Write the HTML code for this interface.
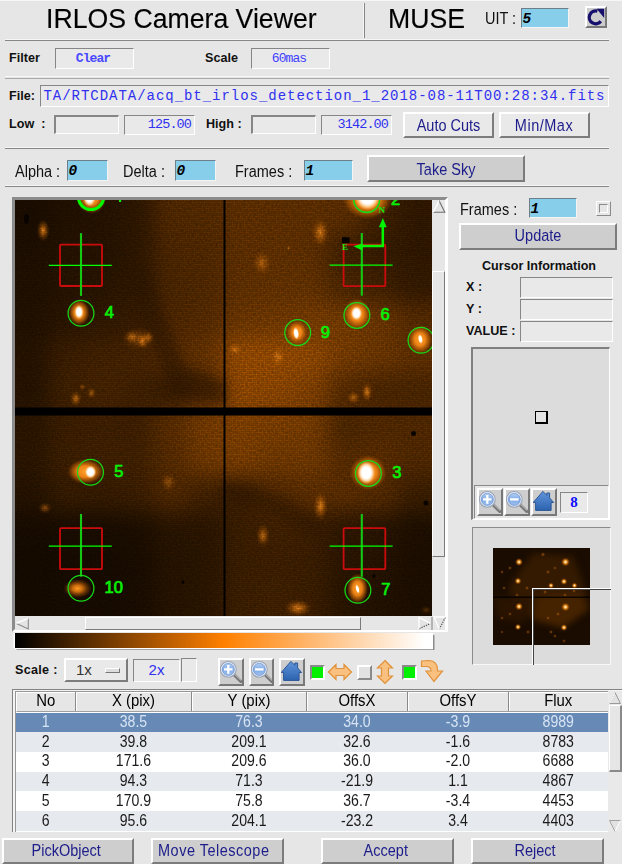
<!DOCTYPE html>
<html><head><meta charset="utf-8"><title>IRLOS Camera Viewer</title>
<style>
html,body{margin:0;padding:0}
body{width:622px;height:864px;background:#e6e6e6;position:relative;overflow:hidden;font-family:"Liberation Sans",sans-serif;color:#000}
div,span{box-sizing:border-box}
.a{position:absolute;white-space:nowrap}
.hs{position:absolute;height:2.4px;border-top:1px solid #f6f6f6;border-bottom:1.4px solid #868686}
.vs{position:absolute;width:2.4px;border-left:1px solid #f6f6f6;border-right:1.4px solid #868686}
.t{position:absolute;white-space:nowrap;font-size:14.5px;line-height:17px;color:#111;transform:scaleY(1.12);transform-origin:50% 78%}
.s{display:inline-block;transform:scaleY(1.1);transform-origin:50% 72%}
.b{position:absolute;white-space:nowrap;font-weight:bold;font-size:12.6px;line-height:15px;color:#111}
.sunk{position:absolute;border:1px solid;border-color:#868686 #fff #fff #868686;background:#e9e9e9}
.ent{position:absolute;border:1px solid;border-color:#6c7f8a #f4f4f4 #f4f4f4 #6c7f8a;background:#87ceeb;font:italic bold 14.5px "Liberation Mono",monospace;line-height:20px;padding-left:0.5px;color:#000}
.btn{position:absolute;border:2px solid;border-color:#fff #7c7c7c #7c7c7c #fff;background:#cecece;color:#1c1c8a;font-size:14.5px;text-align:center;white-space:nowrap}
.btl{background:#e9e9e9}
.mono{font-family:"Liberation Mono",monospace;color:#3030f0}
.ib{position:absolute;border:2px solid;border-color:#fff #787878 #787878 #fff;background:#cecece}
.ib svg{position:absolute;left:0;top:0}
.chk{position:absolute;width:15px;height:15px;border:2px solid;border-color:#8a8a8a #fff #fff #8a8a8a;background:#00f000}
.chk.off{border-color:#fff #8a8a8a #8a8a8a #fff;background:#e2e2e2}
table{border-collapse:collapse}
</style></head><body>
<div class="a" style="left:0;top:0;width:622px;height:1.3px;background:#f6f6f6"></div>
<div class="a" style="left:46px;top:4px;font-size:26.67px;line-height:31px;-webkit-text-stroke:0.15px #000;transform:scaleY(1.05);transform-origin:50% 79%">IRLOS Camera Viewer</div>
<div class="vs" style="left:362.6px;top:3px;height:34.5px"></div>
<div class="a" style="left:388px;top:4px;font-size:26.67px;line-height:31px;-webkit-text-stroke:0.15px #000;transform:scaleY(1.05);transform-origin:50% 79%">MUSE</div>
<div class="t" style="left:485px;top:11px">UIT :</div>
<div class="ent" style="left:521px;top:8px;width:48px;height:20px">5</div>
<div class="ib" style="left:584.5px;top:6px;width:22px;height:22px;background:#cdcdcd"><svg width="19" height="18" viewBox="0 0 19 18"><path d="M10.4 3.2 A6.4 6.4 0 1 0 13.8 13.2" fill="none" stroke="#16106c" stroke-width="3.3"/><path d="M9.6 0.8 L17.2 0.8 L17.2 10 Z" fill="#16106c"/></svg></div>
<div class="hs" style="left:5px;top:38.9px;width:604px"></div>
<div class="b" style="left:9px;top:51px">Filter</div>
<div class="sunk mono" style="left:55px;top:48px;width:79px;height:21px;font:bold 13px 'Liberation Mono',monospace;letter-spacing:-0.9px;line-height:20px;padding-right:3px;text-align:center;color:#4848ff">Clear</div>
<div class="b" style="left:205px;top:51px">Scale</div>
<div class="sunk mono" style="left:251px;top:48px;width:79px;height:21px;font:13px 'Liberation Mono',monospace;letter-spacing:-0.9px;line-height:20px;padding-right:3px;text-align:center;color:#4040ff">60mas</div>
<div class="hs" style="left:5px;top:76.2px;width:604px;height:2.8px;border-bottom:1.8px solid #aaa"></div>
<div class="b" style="left:9px;top:89px">File:</div>
<div class="sunk mono" style="left:40px;top:85px;width:569px;height:22px;font-size:14px;letter-spacing:0.965px;line-height:21px;padding-left:2.5px;overflow:hidden;white-space:nowrap">TA/RTCDATA/acq_bt_irlos_detection_1_2018-08-11T00:28:34.fits</div>
<div class="b" style="left:9px;top:117px">Low&nbsp;&nbsp;:</div>
<div class="sunk" style="left:54px;top:115px;width:65px;height:19px;border-width:2px 1px 1px 2px"></div>
<div class="sunk mono" style="left:124px;top:115px;width:71px;height:20px;font-size:13.5px;letter-spacing:-0.9px;line-height:18px;text-align:right;padding-right:3px">125.00</div>
<div class="b" style="left:206px;top:117px">High :</div>
<div class="sunk" style="left:251px;top:115px;width:65px;height:19px;border-width:2px 1px 1px 2px"></div>
<div class="sunk mono" style="left:321px;top:115px;width:71px;height:20px;font-size:13.5px;letter-spacing:-0.9px;line-height:18px;text-align:right;padding-right:3px">3142.00</div>
<div class="btn btl" style="left:403px;top:112px;width:91px;height:26px;line-height:24px"><span class="s">Auto Cuts</span></div>
<div class="btn btl" style="left:498.5px;top:112px;width:91px;height:26px;line-height:24px;letter-spacing:0.5px"><span class="s">Min/Max</span></div>
<div class="hs" style="left:5px;top:147px;width:604px"></div>
<div class="t" style="left:15px;top:164px">Alpha :</div>
<div class="ent" style="left:67px;top:160px;width:41px;height:21px">0</div>
<div class="t" style="left:123px;top:164px">Delta :</div>
<div class="ent" style="left:175px;top:160px;width:41px;height:21px">0</div>
<div class="t" style="left:235px;top:164px">Frames :</div>
<div class="ent" style="left:304px;top:160px;width:49px;height:21px">1</div>
<div class="btn" style="left:367px;top:155px;width:158px;height:27px;line-height:26px"><span class="s">Take Sky</span></div>
<div class="hs" style="left:5px;top:184.5px;width:604px;height:2.5px;border-bottom-width:1.5px"></div>
<div class="a" style="left:12px;top:197px;width:436.2px;height:435px;border:3px solid;border-right-width:3.4px;border-color:#8c8c8c #fff #fff #8c8c8c;background:#e9e9e9"></div>
<svg class="a" style="left:15px;top:200px" width="417" height="416" viewBox="15 200 417 416">
<defs>
<radialGradient id="gb"><stop offset="0" stop-color="#fff"/><stop offset="0.28" stop-color="#fff"/><stop offset="0.42" stop-color="#ffc070"/><stop offset="0.6" stop-color="#f08010" stop-opacity="0.85"/><stop offset="0.8" stop-color="#c86000" stop-opacity="0.35"/><stop offset="1" stop-color="#a04800" stop-opacity="0"/></radialGradient>
<radialGradient id="gm"><stop offset="0" stop-color="#fff"/><stop offset="0.15" stop-color="#ffe8c0"/><stop offset="0.35" stop-color="#ffa030"/><stop offset="0.6" stop-color="#e07000" stop-opacity="0.7"/><stop offset="1" stop-color="#a04800" stop-opacity="0"/></radialGradient>
<radialGradient id="gd"><stop offset="0" stop-color="#ffa030"/><stop offset="0.3" stop-color="#f08010" stop-opacity="0.9"/><stop offset="0.65" stop-color="#c06000" stop-opacity="0.45"/><stop offset="1" stop-color="#a04800" stop-opacity="0"/></radialGradient>
<radialGradient id="gh"><stop offset="0" stop-color="#ffa028"/><stop offset="0.45" stop-color="#f48818" stop-opacity="0.95"/><stop offset="0.75" stop-color="#d87008" stop-opacity="0.5"/><stop offset="1" stop-color="#b05800" stop-opacity="0"/></radialGradient>
<radialGradient id="gh2"><stop offset="0" stop-color="#ff9a20"/><stop offset="0.35" stop-color="#e87c10" stop-opacity="0.85"/><stop offset="0.7" stop-color="#c06004" stop-opacity="0.4"/><stop offset="1" stop-color="#a05000" stop-opacity="0"/></radialGradient>
<radialGradient id="gc"><stop offset="0" stop-color="#fff"/><stop offset="0.5" stop-color="#fff"/><stop offset="0.72" stop-color="#ffe6c0" stop-opacity="0.8"/><stop offset="1" stop-color="#ffb050" stop-opacity="0"/></radialGradient>
<radialGradient id="gf"><stop offset="0" stop-color="#f89020" stop-opacity="1"/><stop offset="0.35" stop-color="#e07810" stop-opacity="0.7"/><stop offset="0.7" stop-color="#c06404" stop-opacity="0.28"/><stop offset="1" stop-color="#a04800" stop-opacity="0"/></radialGradient>
<radialGradient id="gv"><stop offset="0" stop-color="#c06810" stop-opacity="0.7"/><stop offset="0.5" stop-color="#a85808" stop-opacity="0.35"/><stop offset="1" stop-color="#a04800" stop-opacity="0"/></radialGradient>
<filter id="bl" color-interpolation-filters="sRGB" x="-20%" y="-20%" width="140%" height="140%"><feGaussianBlur stdDeviation="11"/></filter>
<filter id="bs" color-interpolation-filters="sRGB" x="-20%" y="-20%" width="140%" height="140%"><feGaussianBlur stdDeviation="5"/></filter>
<filter id="nz" x="0" y="0" width="100%" height="100%" color-interpolation-filters="sRGB"><feTurbulence type="fractalNoise" baseFrequency="0.5" numOctaves="1" seed="7" result="t"/><feColorMatrix in="t" type="matrix" values="0 0 0 0 0  0 0 0 0 0  0 0 0 0 0  0.62 0 0 0 -0.2"/></filter>
<pattern id="scan" width="2" height="2" patternUnits="userSpaceOnUse"><rect width="2" height="1" y="1" fill="#000" opacity="0.10"/><rect width="1" height="2" x="1" fill="#000" opacity="0.05"/></pattern>
</defs>
<rect x="15" y="199" width="417" height="417" fill="#462300"/>
<g filter="url(#bl)">
<rect x="-15.0" y="169.0" width="65.2" height="65.2" fill="#1f0f00"/>
<rect x="49.8" y="169.0" width="35.2" height="65.2" fill="#271300"/>
<rect x="84.5" y="169.0" width="35.2" height="65.2" fill="#2b1500"/>
<rect x="119.2" y="169.0" width="35.2" height="65.2" fill="#341a00"/>
<rect x="154.0" y="169.0" width="35.2" height="65.2" fill="#5d2e00"/>
<rect x="188.8" y="169.0" width="35.2" height="65.2" fill="#603000"/>
<rect x="223.5" y="169.0" width="35.2" height="65.2" fill="#6d3600"/>
<rect x="258.2" y="169.0" width="35.2" height="65.2" fill="#6d3600"/>
<rect x="293.0" y="169.0" width="35.2" height="65.2" fill="#6d3600"/>
<rect x="327.8" y="169.0" width="35.2" height="65.2" fill="#693400"/>
<rect x="362.5" y="169.0" width="35.2" height="65.2" fill="#4a2500"/>
<rect x="397.2" y="169.0" width="65.2" height="65.2" fill="#371b00"/>
<rect x="-15.0" y="233.8" width="65.2" height="35.2" fill="#221100"/>
<rect x="49.8" y="233.8" width="35.2" height="35.2" fill="#2b1500"/>
<rect x="84.5" y="233.8" width="35.2" height="35.2" fill="#2b1500"/>
<rect x="119.2" y="233.8" width="35.2" height="35.2" fill="#341a00"/>
<rect x="154.0" y="233.8" width="35.2" height="35.2" fill="#592c00"/>
<rect x="188.8" y="233.8" width="35.2" height="35.2" fill="#5d2e00"/>
<rect x="223.5" y="233.8" width="35.2" height="35.2" fill="#6d3600"/>
<rect x="258.2" y="233.8" width="35.2" height="35.2" fill="#6f3700"/>
<rect x="293.0" y="233.8" width="35.2" height="35.2" fill="#6d3600"/>
<rect x="327.8" y="233.8" width="35.2" height="35.2" fill="#4a2500"/>
<rect x="362.5" y="233.8" width="35.2" height="35.2" fill="#3e1f00"/>
<rect x="397.2" y="233.8" width="65.2" height="35.2" fill="#371b00"/>
<rect x="-15.0" y="268.5" width="65.2" height="35.2" fill="#251200"/>
<rect x="49.8" y="268.5" width="35.2" height="35.2" fill="#2c1600"/>
<rect x="84.5" y="268.5" width="35.2" height="35.2" fill="#2f1700"/>
<rect x="119.2" y="268.5" width="35.2" height="35.2" fill="#371b00"/>
<rect x="154.0" y="268.5" width="35.2" height="35.2" fill="#562b00"/>
<rect x="188.8" y="268.5" width="35.2" height="35.2" fill="#5d2e00"/>
<rect x="223.5" y="268.5" width="35.2" height="35.2" fill="#6f3700"/>
<rect x="258.2" y="268.5" width="35.2" height="35.2" fill="#723900"/>
<rect x="293.0" y="268.5" width="35.2" height="35.2" fill="#723900"/>
<rect x="327.8" y="268.5" width="35.2" height="35.2" fill="#562b00"/>
<rect x="362.5" y="268.5" width="35.2" height="35.2" fill="#4a2500"/>
<rect x="397.2" y="268.5" width="65.2" height="35.2" fill="#3b1d00"/>
<rect x="-15.0" y="303.2" width="65.2" height="35.2" fill="#271300"/>
<rect x="49.8" y="303.2" width="35.2" height="35.2" fill="#311800"/>
<rect x="84.5" y="303.2" width="35.2" height="35.2" fill="#371b00"/>
<rect x="119.2" y="303.2" width="35.2" height="35.2" fill="#402000"/>
<rect x="154.0" y="303.2" width="35.2" height="35.2" fill="#592c00"/>
<rect x="188.8" y="303.2" width="35.2" height="35.2" fill="#633100"/>
<rect x="223.5" y="303.2" width="35.2" height="35.2" fill="#7c3e00"/>
<rect x="258.2" y="303.2" width="35.2" height="35.2" fill="#824100"/>
<rect x="293.0" y="303.2" width="35.2" height="35.2" fill="#884400"/>
<rect x="327.8" y="303.2" width="35.2" height="35.2" fill="#884400"/>
<rect x="362.5" y="303.2" width="35.2" height="35.2" fill="#7c3e00"/>
<rect x="397.2" y="303.2" width="65.2" height="35.2" fill="#633100"/>
<rect x="-15.0" y="338.0" width="65.2" height="35.2" fill="#2b1500"/>
<rect x="49.8" y="338.0" width="35.2" height="35.2" fill="#442200"/>
<rect x="84.5" y="338.0" width="35.2" height="35.2" fill="#4c2600"/>
<rect x="119.2" y="338.0" width="35.2" height="35.2" fill="#502800"/>
<rect x="154.0" y="338.0" width="35.2" height="35.2" fill="#633100"/>
<rect x="188.8" y="338.0" width="35.2" height="35.2" fill="#753a00"/>
<rect x="223.5" y="338.0" width="35.2" height="35.2" fill="#ad5600"/>
<rect x="258.2" y="338.0" width="35.2" height="35.2" fill="#ad5600"/>
<rect x="293.0" y="338.0" width="35.2" height="35.2" fill="#a75300"/>
<rect x="327.8" y="338.0" width="35.2" height="35.2" fill="#884400"/>
<rect x="362.5" y="338.0" width="35.2" height="35.2" fill="#7c3e00"/>
<rect x="397.2" y="338.0" width="65.2" height="35.2" fill="#6f3700"/>
<rect x="-15.0" y="372.8" width="65.2" height="35.2" fill="#2b1500"/>
<rect x="49.8" y="372.8" width="35.2" height="35.2" fill="#4a2500"/>
<rect x="84.5" y="372.8" width="35.2" height="35.2" fill="#502800"/>
<rect x="119.2" y="372.8" width="35.2" height="35.2" fill="#4a2500"/>
<rect x="154.0" y="372.8" width="35.2" height="35.2" fill="#3e1f00"/>
<rect x="188.8" y="372.8" width="35.2" height="35.2" fill="#5d2e00"/>
<rect x="223.5" y="372.8" width="35.2" height="35.2" fill="#a75300"/>
<rect x="258.2" y="372.8" width="35.2" height="35.2" fill="#a15000"/>
<rect x="293.0" y="372.8" width="35.2" height="35.2" fill="#944a00"/>
<rect x="327.8" y="372.8" width="35.2" height="35.2" fill="#633100"/>
<rect x="362.5" y="372.8" width="35.2" height="35.2" fill="#562b00"/>
<rect x="397.2" y="372.8" width="65.2" height="35.2" fill="#542a00"/>
<rect x="-15.0" y="407.5" width="65.2" height="35.2" fill="#311800"/>
<rect x="49.8" y="407.5" width="35.2" height="35.2" fill="#442200"/>
<rect x="84.5" y="407.5" width="35.2" height="35.2" fill="#472300"/>
<rect x="119.2" y="407.5" width="35.2" height="35.2" fill="#472300"/>
<rect x="154.0" y="407.5" width="35.2" height="35.2" fill="#693400"/>
<rect x="188.8" y="407.5" width="35.2" height="35.2" fill="#884400"/>
<rect x="223.5" y="407.5" width="35.2" height="35.2" fill="#924900"/>
<rect x="258.2" y="407.5" width="35.2" height="35.2" fill="#8e4700"/>
<rect x="293.0" y="407.5" width="35.2" height="35.2" fill="#884400"/>
<rect x="327.8" y="407.5" width="35.2" height="35.2" fill="#562b00"/>
<rect x="362.5" y="407.5" width="35.2" height="35.2" fill="#5d2e00"/>
<rect x="397.2" y="407.5" width="65.2" height="35.2" fill="#5d2e00"/>
<rect x="-15.0" y="442.2" width="65.2" height="35.2" fill="#311800"/>
<rect x="49.8" y="442.2" width="35.2" height="35.2" fill="#472300"/>
<rect x="84.5" y="442.2" width="35.2" height="35.2" fill="#4a2500"/>
<rect x="119.2" y="442.2" width="35.2" height="35.2" fill="#4a2500"/>
<rect x="154.0" y="442.2" width="35.2" height="35.2" fill="#633100"/>
<rect x="188.8" y="442.2" width="35.2" height="35.2" fill="#824100"/>
<rect x="223.5" y="442.2" width="35.2" height="35.2" fill="#8e4700"/>
<rect x="258.2" y="442.2" width="35.2" height="35.2" fill="#824100"/>
<rect x="293.0" y="442.2" width="35.2" height="35.2" fill="#824100"/>
<rect x="327.8" y="442.2" width="35.2" height="35.2" fill="#633100"/>
<rect x="362.5" y="442.2" width="35.2" height="35.2" fill="#693400"/>
<rect x="397.2" y="442.2" width="65.2" height="35.2" fill="#5d2e00"/>
<rect x="-15.0" y="477.0" width="65.2" height="35.2" fill="#2b1500"/>
<rect x="49.8" y="477.0" width="35.2" height="35.2" fill="#3e1f00"/>
<rect x="84.5" y="477.0" width="35.2" height="35.2" fill="#3e1f00"/>
<rect x="119.2" y="477.0" width="35.2" height="35.2" fill="#442200"/>
<rect x="154.0" y="477.0" width="35.2" height="35.2" fill="#5d2e00"/>
<rect x="188.8" y="477.0" width="35.2" height="35.2" fill="#4a2500"/>
<rect x="223.5" y="477.0" width="35.2" height="35.2" fill="#442200"/>
<rect x="258.2" y="477.0" width="35.2" height="35.2" fill="#5d2e00"/>
<rect x="293.0" y="477.0" width="35.2" height="35.2" fill="#693400"/>
<rect x="327.8" y="477.0" width="35.2" height="35.2" fill="#693400"/>
<rect x="362.5" y="477.0" width="35.2" height="35.2" fill="#633100"/>
<rect x="397.2" y="477.0" width="65.2" height="35.2" fill="#442200"/>
<rect x="-15.0" y="511.8" width="65.2" height="35.2" fill="#1b0d00"/>
<rect x="49.8" y="511.8" width="35.2" height="35.2" fill="#1d0e00"/>
<rect x="84.5" y="511.8" width="35.2" height="35.2" fill="#1d0e00"/>
<rect x="119.2" y="511.8" width="35.2" height="35.2" fill="#201000"/>
<rect x="154.0" y="511.8" width="35.2" height="35.2" fill="#2f1700"/>
<rect x="188.8" y="511.8" width="35.2" height="35.2" fill="#311800"/>
<rect x="223.5" y="511.8" width="35.2" height="35.2" fill="#442200"/>
<rect x="258.2" y="511.8" width="35.2" height="35.2" fill="#4a2500"/>
<rect x="293.0" y="511.8" width="35.2" height="35.2" fill="#472300"/>
<rect x="327.8" y="511.8" width="35.2" height="35.2" fill="#341a00"/>
<rect x="362.5" y="511.8" width="35.2" height="35.2" fill="#2f1700"/>
<rect x="397.2" y="511.8" width="65.2" height="35.2" fill="#221100"/>
<rect x="-15.0" y="546.5" width="65.2" height="35.2" fill="#180c00"/>
<rect x="49.8" y="546.5" width="35.2" height="35.2" fill="#1b0d00"/>
<rect x="84.5" y="546.5" width="35.2" height="35.2" fill="#1b0d00"/>
<rect x="119.2" y="546.5" width="35.2" height="35.2" fill="#1d0e00"/>
<rect x="154.0" y="546.5" width="35.2" height="35.2" fill="#2c1600"/>
<rect x="188.8" y="546.5" width="35.2" height="35.2" fill="#311800"/>
<rect x="223.5" y="546.5" width="35.2" height="35.2" fill="#442200"/>
<rect x="258.2" y="546.5" width="35.2" height="35.2" fill="#472300"/>
<rect x="293.0" y="546.5" width="35.2" height="35.2" fill="#442200"/>
<rect x="327.8" y="546.5" width="35.2" height="35.2" fill="#311800"/>
<rect x="362.5" y="546.5" width="35.2" height="35.2" fill="#2b1500"/>
<rect x="397.2" y="546.5" width="65.2" height="35.2" fill="#211000"/>
<rect x="-15.0" y="581.2" width="65.2" height="65.2" fill="#180c00"/>
<rect x="49.8" y="581.2" width="35.2" height="65.2" fill="#1b0d00"/>
<rect x="84.5" y="581.2" width="35.2" height="65.2" fill="#1b0d00"/>
<rect x="119.2" y="581.2" width="35.2" height="65.2" fill="#1d0e00"/>
<rect x="154.0" y="581.2" width="35.2" height="65.2" fill="#2c1600"/>
<rect x="188.8" y="581.2" width="35.2" height="65.2" fill="#311800"/>
<rect x="223.5" y="581.2" width="35.2" height="65.2" fill="#462300"/>
<rect x="258.2" y="581.2" width="35.2" height="65.2" fill="#4a2500"/>
<rect x="293.0" y="581.2" width="35.2" height="65.2" fill="#452200"/>
<rect x="327.8" y="581.2" width="35.2" height="65.2" fill="#2f1700"/>
<rect x="362.5" y="581.2" width="35.2" height="65.2" fill="#281400"/>
<rect x="397.2" y="581.2" width="65.2" height="65.2" fill="#211000"/>
</g>
<g filter="url(#bs)" opacity="0.5">
<polygon points="132,270 148,270 166,320 186,368 226,382 226,404 176,396 150,342 134,300" fill="#311800"/>
<polygon points="222,482 250,486 290,500 325,525 320,540 285,521 250,506 222,500" fill="#371b00"/>
</g>
<ellipse cx="43.2" cy="230.5" rx="6.5" ry="11" fill="url(#gf)" opacity="1"/>
<ellipse cx="139" cy="338.5" rx="18" ry="12" fill="url(#gf)" opacity="0.45"/>
<ellipse cx="142.5" cy="341" rx="6" ry="8" fill="url(#gf)" opacity="1"/>
<ellipse cx="132" cy="337" rx="8" ry="7" fill="url(#gf)" opacity="0.75"/>
<ellipse cx="148" cy="337.5" rx="6" ry="6" fill="url(#gf)" opacity="0.8"/>
<ellipse cx="320.3" cy="232.3" rx="9" ry="15" fill="url(#gf)" opacity="0.95"/>
<ellipse cx="262" cy="263" rx="10" ry="13" fill="url(#gf)" opacity="0.65"/>
<ellipse cx="278" cy="356.7" rx="8" ry="11" fill="url(#gf)" opacity="0.9"/>
<ellipse cx="235" cy="349.6" rx="8" ry="7" fill="url(#gf)" opacity="0.85"/>
<ellipse cx="75.8" cy="398.6" rx="6" ry="8" fill="url(#gf)" opacity="0.8"/>
<ellipse cx="91.5" cy="393" rx="5" ry="6" fill="url(#gf)" opacity="0.6"/>
<ellipse cx="82.5" cy="387" rx="3.5" ry="3.5" fill="url(#gf)" opacity="0.5"/>
<ellipse cx="367" cy="392" rx="5.5" ry="10" fill="url(#gf)" opacity="1"/>
<ellipse cx="353.5" cy="397.5" rx="7" ry="7" fill="url(#gf)" opacity="0.7"/>
<ellipse cx="168.5" cy="482" rx="8" ry="10" fill="url(#gf)" opacity="0.5"/>
<ellipse cx="45" cy="508" rx="7" ry="6" fill="url(#gf)" opacity="0.55"/>
<ellipse cx="263" cy="535.5" rx="7" ry="12" fill="url(#gf)" opacity="0.8"/>
<ellipse cx="320.5" cy="506" rx="7.5" ry="15" fill="url(#gf)" opacity="1"/>
<ellipse cx="298" cy="608" rx="14" ry="9" fill="url(#gf)" opacity="1"/>
<ellipse cx="288.5" cy="248" rx="1.6" ry="2.4" fill="url(#gf)" opacity="1"/>
<ellipse cx="426" cy="610" rx="6" ry="4" fill="url(#gf)" opacity="0.3"/>
<ellipse cx="26.5" cy="219" rx="2.5" ry="5" fill="#0c0400"/>
<ellipse cx="413.5" cy="433.5" rx="2.5" ry="2.5" fill="#0c0400"/>
<ellipse cx="426" cy="503" rx="2.5" ry="2.5" fill="#0c0400"/>
<ellipse cx="183" cy="582" rx="1.5" ry="2" fill="#0c0400"/>
<ellipse cx="374" cy="576" rx="1.5" ry="2" fill="#0c0400"/>
<rect x="15" y="199" width="417" height="417" fill="url(#scan)"/>
<rect x="15" y="199" width="417" height="417" filter="url(#nz)"/>
<ellipse cx="91.5" cy="197" rx="15" ry="17" fill="url(#gh)"/>
<ellipse cx="89.5" cy="197" rx="6.5" ry="9.5" fill="url(#gc)"/>
<ellipse cx="367.5" cy="199" rx="25" ry="20" fill="url(#gh)"/>
<ellipse cx="367.5" cy="197.5" rx="12.5" ry="12.5" fill="url(#gc)"/>
<ellipse cx="368" cy="472.5" rx="18.5" ry="17.5" fill="url(#gh)"/>
<ellipse cx="366.3" cy="472.7" rx="9" ry="11.5" fill="url(#gc)"/>
<ellipse cx="79" cy="312.5" rx="10.5" ry="13" fill="url(#gh)"/>
<ellipse cx="79" cy="312" rx="4.6" ry="7" fill="url(#gc)"/>
<ellipse cx="85.5" cy="471.5" rx="18" ry="12.5" fill="url(#gh)"/>
<ellipse cx="90.5" cy="472" rx="5.8" ry="6.6" fill="url(#gc)"/>
<ellipse cx="357" cy="314" rx="13.5" ry="15.5" fill="url(#gh)"/>
<ellipse cx="356.5" cy="313.3" rx="5.8" ry="7.2" fill="url(#gc)"/>
<ellipse cx="357.5" cy="588.5" rx="10.5" ry="15" fill="url(#gh)"/>
<ellipse cx="357.5" cy="589" rx="2" ry="5" fill="url(#gc)" transform="rotate(-15 357.5 589)"/>
<ellipse cx="420" cy="339.5" rx="12" ry="14" fill="url(#gh)"/>
<ellipse cx="420.4" cy="339" rx="2.5" ry="5" fill="url(#gc)" transform="rotate(-10 420.4 339)"/>
<ellipse cx="297" cy="332.3" rx="10" ry="11.5" fill="url(#gh)"/>
<ellipse cx="296.1" cy="333.3" rx="3" ry="6.3" fill="url(#gc)" transform="rotate(-8 296.1 333.3)"/>
<ellipse cx="77.5" cy="588.5" rx="14" ry="9.5" fill="url(#gh2)"/>
<rect x="223.5" y="199" width="2" height="417" fill="#000"/>
<rect x="15" y="407.5" width="417" height="8" fill="#000"/>
<rect x="60" y="244.7" width="42.0" height="41.3" rx="1" fill="none" stroke="#cc0c0c" stroke-width="1.8"/>
<rect x="343.6" y="244.6" width="41.7" height="41.6" rx="1" fill="none" stroke="#cc0c0c" stroke-width="1.8"/>
<rect x="60" y="528.2" width="42.0" height="41.0" rx="1" fill="none" stroke="#cc0c0c" stroke-width="1.8"/>
<rect x="343.6" y="528.2" width="41.7" height="41.0" rx="1" fill="none" stroke="#cc0c0c" stroke-width="1.8"/>
<path d="M81 233.2 V295.9" stroke="#14c814" stroke-width="2.1" fill="none"/>
<path d="M48.8 265.4 H111.8" stroke="#00ff00" stroke-width="1.2" fill="none"/>
<path d="M361.8 233.0 V295.7" stroke="#14c814" stroke-width="2.1" fill="none"/>
<path d="M329.6 265.2 H392.6" stroke="#00ff00" stroke-width="1.2" fill="none"/>
<path d="M81 514.0 V576.7" stroke="#14c814" stroke-width="2.1" fill="none"/>
<path d="M48.8 546.2 H111.8" stroke="#00ff00" stroke-width="1.2" fill="none"/>
<path d="M361.8 514.0 V576.7" stroke="#14c814" stroke-width="2.1" fill="none"/>
<path d="M329.6 546.2 H392.6" stroke="#00ff00" stroke-width="1.2" fill="none"/>
<circle cx="91" cy="196.9" r="12.6" fill="none" stroke="#00f800" stroke-width="3.2"/>
<circle cx="366.7" cy="199.5" r="12.9" fill="none" stroke="#18d818" stroke-width="1.6"/>
<circle cx="368.4" cy="473.4" r="12.9" fill="none" stroke="#18d818" stroke-width="1.25"/>
<circle cx="81" cy="313.3" r="12.9" fill="none" stroke="#18d818" stroke-width="1.25"/>
<circle cx="90.5" cy="472.2" r="12.9" fill="none" stroke="#18d818" stroke-width="1.25"/>
<circle cx="356.9" cy="315.4" r="12.9" fill="none" stroke="#18d818" stroke-width="1.25"/>
<circle cx="357.9" cy="590.2" r="12.9" fill="none" stroke="#18d818" stroke-width="1.25"/>
<circle cx="421" cy="340.3" r="12.9" fill="none" stroke="#18d818" stroke-width="1.25"/>
<circle cx="297.7" cy="332.6" r="12.9" fill="none" stroke="#18d818" stroke-width="1.25"/>
<circle cx="81" cy="588.2" r="12.9" fill="none" stroke="#18d818" stroke-width="1.25"/>
<clipPath id="c1"><rect x="119" y="199" width="2.2" height="4"/></clipPath>
<text x="115.3" y="201.8" clip-path="url(#c1)" font-family="Liberation Sans,sans-serif" font-weight="bold" font-size="16.5" fill="#08f008">1</text>
<text x="390.9" y="204.8" font-family="Liberation Sans,sans-serif" font-size="16.5" fill="#08f008" stroke="#08f008" stroke-width="0.7">2</text>
<text x="392.2" y="478" font-family="Liberation Sans,sans-serif" font-size="16.5" fill="#08f008" stroke="#08f008" stroke-width="0.7">3</text>
<text x="104.7" y="318" font-family="Liberation Sans,sans-serif" font-size="16.5" fill="#08f008" stroke="#08f008" stroke-width="0.7">4</text>
<text x="114.3" y="477.3" font-family="Liberation Sans,sans-serif" font-size="16.5" fill="#08f008" stroke="#08f008" stroke-width="0.7">5</text>
<text x="380.6" y="320.3" font-family="Liberation Sans,sans-serif" font-size="16.5" fill="#08f008" stroke="#08f008" stroke-width="0.7">6</text>
<text x="381.3" y="594.7" font-family="Liberation Sans,sans-serif" font-size="16.5" fill="#08f008" stroke="#08f008" stroke-width="0.7">7</text>
<text x="320.7" y="337.8" font-family="Liberation Sans,sans-serif" font-size="16.5" fill="#08f008" stroke="#08f008" stroke-width="0.7">9</text>
<text x="104.6" y="593.1" font-family="Liberation Sans,sans-serif" font-size="16.5" fill="#08f008" stroke="#08f008" stroke-width="0.7">10</text>
<path d="M382.8 247.3 V226 M384 246.1 H361" stroke="#00f400" stroke-width="2.5" fill="none"/>
<path d="M382.8 218 L386.7 227.3 L378.9 227.3 Z M353.4 246.3 L362.6 243.6 L362.6 250.4 Z" fill="#00f400"/>
<text x="378.6" y="212.8" font-family="Liberation Serif,serif" font-weight="bold" font-size="9" fill="#10e810">N</text>
<text x="342" y="249.6" font-family="Liberation Serif,serif" font-weight="bold" font-size="9" fill="#10e810">E</text>
<rect x="342" y="237.3" width="7.5" height="5.7" fill="#060200"/>
</svg>
<div class="a" style="left:431.5px;top:200px;width:13.3px;height:430px;background:#e6e6e6"></div>
<svg class="a" style="left:432px;top:200px" width="14" height="14" viewBox="0 0 14 14"><path d="M7 0.6 L12.8 12.2 L1.2 12.2 Z" fill="#e4e4e4"/><path d="M7 0.6 L12.8 12.2 L1.2 12.2" fill="none" stroke="#6e6e6e" stroke-width="1.1"/><path d="M7 0.6 L1.2 12.2" stroke="#fff" stroke-width="1.3"/></svg>
<div class="a" style="left:432px;top:271px;width:12.8px;height:286px;border:1.3px solid;border-color:#fff #7a7a7a #7a7a7a #fff;border-right-width:1.2px;border-bottom-width:1.2px;background:#e6e6e6"></div>
<svg class="a" style="left:432.5px;top:616px" width="14" height="14" viewBox="0 0 14 14"><path d="M1 1 L12.5 1 L6.3 13 Z" fill="#e4e4e4"/><path d="M12.3 1.4 L6.5 12.8" stroke="#555" stroke-width="1.3" stroke-dasharray="1.2 1.2" fill="none"/><path d="M6.3 13 L1 1 L12.5 1" stroke="#fff" stroke-width="1.3" fill="none"/></svg>
<div class="a" style="left:15px;top:616px;width:417px;height:14px;background:#e6e6e6"></div>
<svg class="a" style="left:15px;top:616px" width="14" height="14" viewBox="0 0 14 14"><path d="M0.9 7.3 L13.3 2.3 L13.3 13 Z" fill="#e4e4e4"/><path d="M13.3 2.3 L13.3 13 L0.9 7.3" fill="none" stroke="#8a8a8a" stroke-width="1.1"/><path d="M0.9 7.3 L13.3 2.3" stroke="#fff" stroke-width="1.3"/></svg>
<div class="a" style="left:85px;top:616.5px;width:276px;height:13.2px;border:1.3px solid;border-color:#fff #7a7a7a #7a7a7a #fff;border-right-width:1.2px;border-bottom-width:1.2px;background:#e6e6e6"></div>
<svg class="a" style="left:418px;top:616px" width="14" height="14" viewBox="0 0 14 14"><path d="M1 1.5 L12.7 7.3 L1 12.8 Z" fill="#e4e4e4"/><path d="M1.3 12.6 L12.5 7.5" stroke="#555" stroke-width="1.3" stroke-dasharray="1.2 1.2" fill="none"/><path d="M1 12.8 L1 1.5 L12.7 7.3" stroke="#fff" stroke-width="1.3" fill="none"/></svg>
<div class="a" style="left:431.2px;top:616.5px;width:1.5px;height:13.5px;background:#b4b4b4"></div>
<div class="a" style="left:14.5px;top:632.5px;width:418px;height:15.5px;box-shadow:-1.5px 0 0 #fff,0 1.2px 0 #fff,1.5px 2px 0 #8c8c8c;background:linear-gradient(to right,#000 0%,#ff8000 50%,#fff 98%,#fff 100%)"></div>
<div class="b" style="left:15px;top:663px;letter-spacing:0.3px">Scale :</div>
<div class="btn btl" style="left:64px;top:658px;width:64px;height:24px;color:#333;text-align:left;padding-left:10px;line-height:19px;font-size:15px">1x</div>
<div class="a" style="left:105px;top:668px;width:15px;height:5px;border:1px solid;border-color:#fff #777 #777 #fff;background:#ddd"></div>
<div class="sunk" style="left:133px;top:659px;width:47px;height:23px;color:#3030f0;font-size:15px;line-height:20px;text-align:center">2x</div>
<div class="sunk" style="left:181px;top:658px;width:16px;height:24px"></div>
<div class="ib" style="left:217.5px;top:658px;width:26px;height:27.5px"><svg width="23" height="24" viewBox="0 0 23 24"><defs><linearGradient id="mgp1" x1="0" y1="0" x2="0" y2="1"><stop offset="0" stop-color="#b4d0f4"/><stop offset="0.5" stop-color="#7faae6"/><stop offset="1" stop-color="#9cc0f0"/></linearGradient></defs><path d="M14.5 15.2 L20.8 21.4" stroke="#777" stroke-width="3.2" stroke-linecap="round"/><path d="M15 14.6 L21 20.4" stroke="#cfcfcf" stroke-width="1"/><circle cx="8.3" cy="9.4" r="7.9" fill="#e4ecf8" stroke="#9aa4b4" stroke-width="1.1"/><circle cx="8.3" cy="9.4" r="6" fill="url(#mgp1)" stroke="#7396cf" stroke-width="0.8"/><path d="M4 9.4 H12.6 M8.3 5.1 V13.7" stroke="#fff" stroke-width="2.3"/></svg></div>
<div class="ib" style="left:248.5px;top:658px;width:25.5px;height:27.5px"><svg width="23" height="24" viewBox="0 0 23 24"><defs><linearGradient id="mgm2" x1="0" y1="0" x2="0" y2="1"><stop offset="0" stop-color="#b4d0f4"/><stop offset="0.5" stop-color="#7faae6"/><stop offset="1" stop-color="#9cc0f0"/></linearGradient></defs><path d="M14.5 15.2 L20.8 21.4" stroke="#777" stroke-width="3.2" stroke-linecap="round"/><path d="M15 14.6 L21 20.4" stroke="#cfcfcf" stroke-width="1"/><circle cx="8.3" cy="9.4" r="7.9" fill="#e4ecf8" stroke="#9aa4b4" stroke-width="1.1"/><circle cx="8.3" cy="9.4" r="6" fill="url(#mgm2)" stroke="#7396cf" stroke-width="0.8"/><path d="M4 9.4 H12.6" stroke="#fff" stroke-width="2.3"/></svg></div>
<div class="ib" style="left:278.5px;top:658px;width:26px;height:27.5px"><svg width="23" height="24" viewBox="0 0 23 24"><defs><linearGradient id="hg3" x1="0" y1="0" x2="0" y2="1"><stop offset="0" stop-color="#6196dc"/><stop offset="1" stop-color="#2c62ae"/></linearGradient></defs><path d="M9.9 1.4 L0.2 12.5 L2.6 12.5 L2.6 20.4 L18.1 20.4 L18.1 12.5 L20.6 12.5 L16.6 7.9 L16.6 3 L13.8 3 L13.8 5.3 Z" fill="url(#hg3)" stroke="#2a5596" stroke-width="1"/></svg></div>
<div class="chk" style="left:310px;top:665px"></div>
<div class="chk off" style="left:357px;top:665px"></div>
<div class="chk" style="left:402px;top:665px"></div>
<svg class="a" style="left:327px;top:662px" width="26" height="20" viewBox="0 0 26 20"><path d="M1.5 10 L9 2.5 L9 6.5 L17 6.5 L17 2.5 L24.5 10 L17 17.5 L17 13.5 L9 13.5 L9 17.5 Z" fill="#fac080" stroke="#e0923a" stroke-width="1.2"/></svg>
<svg class="a" style="left:375px;top:659px" width="20" height="26" viewBox="0 0 20 26"><path d="M10 1.5 L17.5 9 L13.5 9 L13.5 17 L17.5 17 L10 24.5 L2.5 17 L6.5 17 L6.5 9 L2.5 9 Z" fill="#fac080" stroke="#e0923a" stroke-width="1.2"/></svg>
<svg class="a" style="left:419px;top:658px" width="26" height="26" viewBox="0 0 26 26"><path d="M2.5 3 L10 2.5 Q18.5 3 18.5 12 L18.5 13 L23.5 13 L15 23.5 L7 13 L12 13 Q12 9 8 8.5 L2.5 8.5 Z" fill="#fac080" stroke="#e0923a" stroke-width="1.2"/></svg>
<div class="t" style="left:460px;top:201.5px">Frames :</div>
<div class="ent" style="left:529px;top:198px;width:48px;height:20px">1</div>
<div class="a" style="left:596px;top:201px;width:15px;height:15px;border:1px solid;border-color:#fff #8a8a8a #8a8a8a #fff;background:#e6e6e6"></div>
<div class="a" style="left:599px;top:204px;width:9px;height:9px;border:1px solid;border-color:#8a8a8a #fff #fff #8a8a8a;background:#e6e6e6"></div>
<div class="btn" style="left:459px;top:223px;width:158px;height:27px;line-height:23px"><span class="s">Update</span></div>
<div class="b" style="left:482px;top:259px">Cursor Information</div>
<div class="b" style="left:466px;top:279.5px">X :</div>
<div class="sunk" style="left:520px;top:277px;width:93px;height:21px"></div>
<div class="b" style="left:466px;top:301.5px">Y :</div>
<div class="sunk" style="left:520px;top:299px;width:93px;height:21px"></div>
<div class="b" style="left:466px;top:323.5px">VALUE :</div>
<div class="sunk" style="left:520px;top:321px;width:93px;height:21px"></div>
<div class="a" style="left:471px;top:347px;width:139px;height:173px;border:1px solid;border-color:#808080 #fff #fff #808080;border-left-width:2px;border-top-width:2px;background:#dcdcdc"></div>
<div class="a" style="left:535px;top:411px;width:13px;height:13px;border:1px solid #000;border-right-width:2px;border-bottom-width:2px;background:#e4e4e4"></div>
<div class="a" style="left:474px;top:485px;width:135px;height:34px;border:1px solid;border-color:#8a8a8a #fff #fff #8a8a8a;background:#e6e6e6"></div>
<div class="ib" style="left:477px;top:488px;width:26px;height:28px"><svg width="23" height="24" viewBox="0 0 23 24"><defs><linearGradient id="mgp4" x1="0" y1="0" x2="0" y2="1"><stop offset="0" stop-color="#b4d0f4"/><stop offset="0.5" stop-color="#7faae6"/><stop offset="1" stop-color="#9cc0f0"/></linearGradient></defs><path d="M14.5 15.2 L20.8 21.4" stroke="#777" stroke-width="3.2" stroke-linecap="round"/><path d="M15 14.6 L21 20.4" stroke="#cfcfcf" stroke-width="1"/><circle cx="8.3" cy="9.4" r="7.9" fill="#e4ecf8" stroke="#9aa4b4" stroke-width="1.1"/><circle cx="8.3" cy="9.4" r="6" fill="url(#mgp4)" stroke="#7396cf" stroke-width="0.8"/><path d="M4 9.4 H12.6 M8.3 5.1 V13.7" stroke="#fff" stroke-width="2.3"/></svg></div>
<div class="ib" style="left:504px;top:488px;width:26px;height:28px"><svg width="23" height="24" viewBox="0 0 23 24"><defs><linearGradient id="mgm5" x1="0" y1="0" x2="0" y2="1"><stop offset="0" stop-color="#b4d0f4"/><stop offset="0.5" stop-color="#7faae6"/><stop offset="1" stop-color="#9cc0f0"/></linearGradient></defs><path d="M14.5 15.2 L20.8 21.4" stroke="#777" stroke-width="3.2" stroke-linecap="round"/><path d="M15 14.6 L21 20.4" stroke="#cfcfcf" stroke-width="1"/><circle cx="8.3" cy="9.4" r="7.9" fill="#e4ecf8" stroke="#9aa4b4" stroke-width="1.1"/><circle cx="8.3" cy="9.4" r="6" fill="url(#mgm5)" stroke="#7396cf" stroke-width="0.8"/><path d="M4 9.4 H12.6" stroke="#fff" stroke-width="2.3"/></svg></div>
<div class="ib" style="left:531px;top:488px;width:26px;height:28px"><svg width="23" height="24" viewBox="0 0 23 24"><defs><linearGradient id="hg6" x1="0" y1="0" x2="0" y2="1"><stop offset="0" stop-color="#6196dc"/><stop offset="1" stop-color="#2c62ae"/></linearGradient></defs><path d="M9.9 1.4 L0.2 12.5 L2.6 12.5 L2.6 20.4 L18.1 20.4 L18.1 12.5 L20.6 12.5 L16.6 7.9 L16.6 3 L13.8 3 L13.8 5.3 Z" fill="url(#hg6)" stroke="#2a5596" stroke-width="1"/></svg></div>
<div class="sunk" style="left:560px;top:492px;width:28px;height:21px;font:bold 15px 'Liberation Serif',serif;line-height:18px;text-align:center;color:#1010ff">8</div>
<div class="a" style="left:472px;top:527px;width:139px;height:138px;border:1px solid;border-color:#8a8a8a #f8f8f8 #f8f8f8 #8a8a8a;background:#dcdcdc"></div>
<svg class="a" style="left:493px;top:548px" width="97" height="97" viewBox="0 0 97 97">
<defs><radialGradient id="ts"><stop offset="0" stop-color="#fff"/><stop offset="0.3" stop-color="#ffb040"/><stop offset="0.7" stop-color="#c06000" stop-opacity="0.5"/><stop offset="1" stop-color="#803800" stop-opacity="0"/></radialGradient><radialGradient id="tf"><stop offset="0" stop-color="#f08818" stop-opacity="0.9"/><stop offset="1" stop-color="#803800" stop-opacity="0"/></radialGradient><filter id="tb" color-interpolation-filters="sRGB" x="-20%" y="-20%" width="140%" height="140%"><feGaussianBlur stdDeviation="3"/></filter></defs>
<rect width="97" height="97" fill="#1a0c00"/>
<g filter="url(#tb)"><polygon points="40,5 80,8 92,40 97,60 75,70 50,75 30,65 15,40" fill="#341a00"/><polygon points="45,48 85,45 95,62 70,80 40,72" fill="#462300"/><polygon points="0,48 40,50 30,75 5,70" fill="#2a1400"/></g>
<circle cx="26" cy="14" r="4" fill="url(#ts)"/>
<circle cx="72.5" cy="14" r="4.5" fill="url(#ts)"/>
<circle cx="26" cy="58.5" r="4" fill="url(#ts)"/>
<circle cx="72.5" cy="59" r="4.5" fill="url(#ts)"/>
<circle cx="25" cy="33" r="3.5" fill="url(#ts)"/>
<circle cx="71" cy="33.5" r="3.5" fill="url(#ts)"/>
<circle cx="25" cy="79" r="3.2" fill="url(#ts)"/>
<circle cx="71" cy="79.5" r="3.5" fill="url(#ts)"/>
<circle cx="81.5" cy="37.5" r="3" fill="url(#ts)"/>
<circle cx="58" cy="37.5" r="3" fill="url(#ts)"/>
<circle cx="50" cy="6.5" r="2.5" fill="url(#tf)" opacity="0.65"/>
<circle cx="17" cy="20" r="2.2" fill="url(#tf)" opacity="0.65"/>
<circle cx="9" cy="24" r="2" fill="url(#tf)" opacity="0.65"/>
<circle cx="55" cy="24" r="2.2" fill="url(#tf)" opacity="0.65"/>
<circle cx="62" cy="20" r="2" fill="url(#tf)" opacity="0.65"/>
<circle cx="34" cy="40" r="2.2" fill="url(#tf)" opacity="0.65"/>
<circle cx="11" cy="40" r="2" fill="url(#tf)" opacity="0.65"/>
<circle cx="52" cy="44" r="2.2" fill="url(#tf)" opacity="0.65"/>
<circle cx="81" cy="43" r="2" fill="url(#tf)" opacity="0.65"/>
<circle cx="24" cy="47" r="2" fill="url(#tf)" opacity="0.65"/>
<circle cx="72" cy="47" r="2" fill="url(#tf)" opacity="0.65"/>
<circle cx="17" cy="66" r="2" fill="url(#tf)" opacity="0.65"/>
<circle cx="65" cy="66" r="2.2" fill="url(#tf)" opacity="0.65"/>
<circle cx="9" cy="70" r="2" fill="url(#tf)" opacity="0.65"/>
<circle cx="55" cy="70" r="2" fill="url(#tf)" opacity="0.65"/>
<circle cx="35" cy="84" r="2.2" fill="url(#tf)" opacity="0.65"/>
<circle cx="58" cy="84" r="2.2" fill="url(#tf)" opacity="0.65"/>
<circle cx="62" cy="88" r="2" fill="url(#tf)" opacity="0.65"/>
<circle cx="71" cy="93" r="2" fill="url(#tf)" opacity="0.65"/>
<circle cx="9" cy="84" r="1.8" fill="url(#tf)" opacity="0.65"/>
<rect x="0" y="48.6" width="97" height="1.2" fill="#000"/>
</svg>
<div class="a" style="left:532px;top:588px;width:79px;height:77px;border-left:1px solid #fff;border-top:1px solid #fff"></div>
<div class="a" style="left:533px;top:589px;width:78px;height:76px;border-left:1px solid #444;border-top:1px solid #444"></div>
<div class="a" style="left:12.4px;top:689px;width:610px;height:143px;border-left:1.4px solid #828282;border-top:1.4px solid #828282;background:#f4f4f4"></div>
<div class="a" style="left:15px;top:691.3px;width:607px;height:141px;border-left:1px solid #969696;border-top:1px solid #969696;background:#fff"></div>
<div class="a" style="left:16px;top:692.3px;width:592px;height:20px;background:#e6e6e6;border-top:1px solid #fff;border-left:0.6px solid #fff;border-bottom:1px solid #a0a0a0"></div>
<div class="t" style="left:16.0px;top:693px;width:59.5px;text-align:center;font-size:14.9px;color:#000">No</div>
<div class="a" style="left:75.0px;top:692px;width:2px;height:19px;border-left:1px solid #8a8a8a;border-right:1px solid #fff"></div>
<div class="t" style="left:75.5px;top:693px;width:116.0px;text-align:center;font-size:14.9px;color:#000">X (pix)</div>
<div class="a" style="left:191.0px;top:692px;width:2px;height:19px;border-left:1px solid #8a8a8a;border-right:1px solid #fff"></div>
<div class="t" style="left:191.5px;top:693px;width:115.0px;text-align:center;font-size:14.9px;color:#000">Y (pix)</div>
<div class="a" style="left:306.0px;top:692px;width:2px;height:19px;border-left:1px solid #8a8a8a;border-right:1px solid #fff"></div>
<div class="t" style="left:306.5px;top:693px;width:101.0px;text-align:center;font-size:14.9px;color:#000">OffsX</div>
<div class="a" style="left:407.0px;top:692px;width:2px;height:19px;border-left:1px solid #8a8a8a;border-right:1px solid #fff"></div>
<div class="t" style="left:407.5px;top:693px;width:101.0px;text-align:center;font-size:14.9px;color:#000">OffsY</div>
<div class="a" style="left:508.0px;top:692px;width:2px;height:19px;border-left:1px solid #8a8a8a;border-right:1px solid #fff"></div>
<div class="t" style="left:508.5px;top:693px;width:99.5px;text-align:center;font-size:14.9px;color:#000">Flux</div>
<div class="a" style="left:16px;top:712.5px;width:592px;height:20.0px;background:#6689b5"></div>
<div class="t" style="left:16.0px;top:714.0px;width:59.5px;text-align:center;font-size:14.1px;color:#d8e4f4">1</div>
<div class="t" style="left:75.5px;top:714.0px;width:116.0px;text-align:center;font-size:14.1px;color:#d8e4f4">38.5</div>
<div class="t" style="left:191.5px;top:714.0px;width:115.0px;text-align:center;font-size:14.1px;color:#d8e4f4">76.3</div>
<div class="t" style="left:306.5px;top:714.0px;width:101.0px;text-align:center;font-size:14.1px;color:#d8e4f4">34.0</div>
<div class="t" style="left:407.5px;top:714.0px;width:101.0px;text-align:center;font-size:14.1px;color:#d8e4f4">-3.9</div>
<div class="t" style="left:508.5px;top:714.0px;width:99.5px;text-align:center;font-size:14.1px;color:#d8e4f4">8989</div>
<div class="a" style="left:16px;top:732.2px;width:592px;height:20.0px;background:#e6e9ee"></div>
<div class="t" style="left:16.0px;top:733.7px;width:59.5px;text-align:center;font-size:14.1px;color:#1a1a1a">2</div>
<div class="t" style="left:75.5px;top:733.7px;width:116.0px;text-align:center;font-size:14.1px;color:#1a1a1a">39.8</div>
<div class="t" style="left:191.5px;top:733.7px;width:115.0px;text-align:center;font-size:14.1px;color:#1a1a1a">209.1</div>
<div class="t" style="left:306.5px;top:733.7px;width:101.0px;text-align:center;font-size:14.1px;color:#1a1a1a">32.6</div>
<div class="t" style="left:407.5px;top:733.7px;width:101.0px;text-align:center;font-size:14.1px;color:#1a1a1a">-1.6</div>
<div class="t" style="left:508.5px;top:733.7px;width:99.5px;text-align:center;font-size:14.1px;color:#1a1a1a">8783</div>
<div class="a" style="left:16px;top:751.9px;width:592px;height:20.0px;background:#ffffff"></div>
<div class="t" style="left:16.0px;top:753.4px;width:59.5px;text-align:center;font-size:14.1px;color:#1a1a1a">3</div>
<div class="t" style="left:75.5px;top:753.4px;width:116.0px;text-align:center;font-size:14.1px;color:#1a1a1a">171.6</div>
<div class="t" style="left:191.5px;top:753.4px;width:115.0px;text-align:center;font-size:14.1px;color:#1a1a1a">209.6</div>
<div class="t" style="left:306.5px;top:753.4px;width:101.0px;text-align:center;font-size:14.1px;color:#1a1a1a">36.0</div>
<div class="t" style="left:407.5px;top:753.4px;width:101.0px;text-align:center;font-size:14.1px;color:#1a1a1a">-2.0</div>
<div class="t" style="left:508.5px;top:753.4px;width:99.5px;text-align:center;font-size:14.1px;color:#1a1a1a">6688</div>
<div class="a" style="left:16px;top:771.6px;width:592px;height:20.0px;background:#e6e9ee"></div>
<div class="t" style="left:16.0px;top:773.1px;width:59.5px;text-align:center;font-size:14.1px;color:#1a1a1a">4</div>
<div class="t" style="left:75.5px;top:773.1px;width:116.0px;text-align:center;font-size:14.1px;color:#1a1a1a">94.3</div>
<div class="t" style="left:191.5px;top:773.1px;width:115.0px;text-align:center;font-size:14.1px;color:#1a1a1a">71.3</div>
<div class="t" style="left:306.5px;top:773.1px;width:101.0px;text-align:center;font-size:14.1px;color:#1a1a1a">-21.9</div>
<div class="t" style="left:407.5px;top:773.1px;width:101.0px;text-align:center;font-size:14.1px;color:#1a1a1a">1.1</div>
<div class="t" style="left:508.5px;top:773.1px;width:99.5px;text-align:center;font-size:14.1px;color:#1a1a1a">4867</div>
<div class="a" style="left:16px;top:791.3px;width:592px;height:20.0px;background:#ffffff"></div>
<div class="t" style="left:16.0px;top:792.8px;width:59.5px;text-align:center;font-size:14.1px;color:#1a1a1a">5</div>
<div class="t" style="left:75.5px;top:792.8px;width:116.0px;text-align:center;font-size:14.1px;color:#1a1a1a">170.9</div>
<div class="t" style="left:191.5px;top:792.8px;width:115.0px;text-align:center;font-size:14.1px;color:#1a1a1a">75.8</div>
<div class="t" style="left:306.5px;top:792.8px;width:101.0px;text-align:center;font-size:14.1px;color:#1a1a1a">36.7</div>
<div class="t" style="left:407.5px;top:792.8px;width:101.0px;text-align:center;font-size:14.1px;color:#1a1a1a">-3.4</div>
<div class="t" style="left:508.5px;top:792.8px;width:99.5px;text-align:center;font-size:14.1px;color:#1a1a1a">4453</div>
<div class="a" style="left:16px;top:811.0px;width:592px;height:20.0px;background:#e6e9ee"></div>
<div class="t" style="left:16.0px;top:812.5px;width:59.5px;text-align:center;font-size:14.1px;color:#1a1a1a">6</div>
<div class="t" style="left:75.5px;top:812.5px;width:116.0px;text-align:center;font-size:14.1px;color:#1a1a1a">95.6</div>
<div class="t" style="left:191.5px;top:812.5px;width:115.0px;text-align:center;font-size:14.1px;color:#1a1a1a">204.1</div>
<div class="t" style="left:306.5px;top:812.5px;width:101.0px;text-align:center;font-size:14.1px;color:#1a1a1a">-23.2</div>
<div class="t" style="left:407.5px;top:812.5px;width:101.0px;text-align:center;font-size:14.1px;color:#1a1a1a">3.4</div>
<div class="t" style="left:508.5px;top:812.5px;width:99.5px;text-align:center;font-size:14.1px;color:#1a1a1a">4403</div>
<div class="a" style="left:608px;top:691px;width:14px;height:141px;background:#e9e9e9"></div>
<svg class="a" style="left:608px;top:691px" width="14" height="14" viewBox="0 0 14 14"><path d="M7 1.5 L12.5 12.5 L1.5 12.5 Z" fill="#e2e2e2" stroke="#9a9a9a" stroke-width="1"/><path d="M7 1.5 L1.5 12.5" stroke="#fff" stroke-width="1"/></svg>
<div class="a" style="left:609px;top:705px;width:13px;height:67px;border:1px solid;border-color:#fff #8a8a8a #8a8a8a #fff;border-right-width:2px;border-bottom-width:2px;background:#e6e6e6"></div>
<svg class="a" style="left:608px;top:819px" width="14" height="14" viewBox="0 0 14 14"><path d="M7 12.5 L12.5 1.5 L1.5 1.5 Z" fill="#e2e2e2" stroke="#fff" stroke-width="1"/><path d="M1.5 1.5 L12.5 1.5 M7 12.5 L1.5 1.5" stroke="#a0a0a0" stroke-width="1"/></svg>
<div class="a" style="left:0;top:832px;width:622px;height:32px;background:#e6e6e6"></div>
<div class="btn" style="left:2.0px;top:838px;width:131.5px;height:26px;line-height:22px;padding-right:3.0px;letter-spacing:0.0px"><span class="s">PickObject</span></div>
<div class="btn" style="left:151.0px;top:838px;width:132.5px;height:26px;line-height:22px;padding-right:7.0px;letter-spacing:0.5px"><span class="s">Move Telescope</span></div>
<div class="btn" style="left:320.5px;top:838px;width:133.0px;height:26px;line-height:22px;padding-right:2.5px;letter-spacing:0.0px"><span class="s">Accept</span></div>
<div class="btn" style="left:470.5px;top:838px;width:133.0px;height:26px;line-height:22px;padding-right:4.0px;letter-spacing:0.0px"><span class="s">Reject</span></div>
</body></html>
